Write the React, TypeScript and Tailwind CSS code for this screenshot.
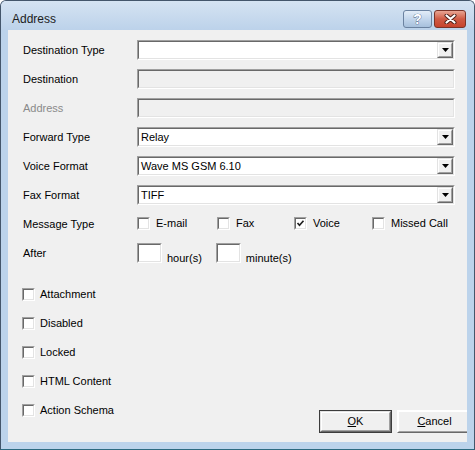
import { ReactNode } from "react";

// classic sunken 3D edge used by edits, combos and check boxes
const Sunken = ({
  className = "",
  inner = "",
  children,
}: {
  className?: string;
  inner?: string;
  children?: ReactNode;
}) => (
  <div
    className={`border border-[#a0a0a0] border-r-white border-b-white ${className}`}
  >
    <div
      className={`h-full w-full border border-[#696969] border-r-[#e3e3e3] border-b-[#e3e3e3] ${inner}`}
    >
      {children}
    </div>
  </div>
);

const Raised = ({
  className = "",
  children,
}: {
  className?: string;
  children?: ReactNode;
}) => (
  <div
    className={`border border-[#e3e3e3] border-r-[#696969] border-b-[#696969] bg-[#f0f0f0] ${className}`}
  >
    <div className="h-full w-full border border-white border-r-[#a0a0a0] border-b-[#a0a0a0] flex items-center justify-center">
      {children}
    </div>
  </div>
);

const ComboBox = ({ value = "" }: { value?: string }) => (
  <Sunken className="h-[20px] flex-1" inner="bg-white flex items-center">
    <span className="flex-1 pl-[2px] text-[11px] leading-none text-black">
      {value}
    </span>
    <Raised className="w-[16px] h-[16px]">
      <svg width="7" height="4" viewBox="0 0 7 4">
        <path d="M0 0h7L3.5 4z" fill="#000" />
      </svg>
    </Raised>
  </Sunken>
);

const TextBox = ({
  disabled,
  className = "h-[20px] flex-1",
}: {
  disabled?: boolean;
  className?: string;
}) => (
  <Sunken
    className={className}
    inner={disabled ? "bg-[#f0f0f0]" : "bg-white"}
  />
);

const CheckBox = ({ checked }: { checked?: boolean }) => (
  <Sunken className="w-[13px] h-[13px] shrink-0" inner="bg-white">
    {checked && (
      <svg width="9" height="9" viewBox="0 0 9 9" className="block">
        <path
          d="M1.5 4 L3.5 6.2 L7.5 1.8"
          fill="none"
          stroke="#222"
          strokeWidth="1.7"
        />
      </svg>
    )}
  </Sunken>
);

const Option = ({
  label,
  checked,
  width,
}: {
  label: string;
  checked?: boolean;
  width: string;
}) => (
  <div className={`flex items-center gap-[6px] ${width}`}>
    <CheckBox checked={checked} />
    <span className="text-[11px] leading-none">{label}</span>
  </div>
);

const Row = ({
  label,
  muted,
  children,
}: {
  label: string;
  muted?: boolean;
  children: ReactNode;
}) => (
  <div className="flex items-center h-[20px]">
    <span
      className={`w-[114px] shrink-0 text-[11px] leading-none ${
        muted ? "text-[#8a8a8a]" : "text-black"
      }`}
    >
      {label}
    </span>
    {children}
  </div>
);

const flags = ["Attachment", "Disabled", "Locked", "HTML Content", "Action Schema"];

export default function App() {
  return (
    <div className="w-[475px] h-[450px] flex flex-col border border-[#44566b] border-b-[#2d6a80] rounded-t-[6px] bg-[#bcd3eb] font-['Liberation_Sans',Arial,sans-serif] text-black overflow-hidden">
      {/* caption */}
      <div className="h-[29px] shrink-0 flex items-center justify-between pt-[6px] pl-[11px] pr-[8px] bg-gradient-to-b from-[#d5e3f2] to-[#bcd2ea]">
        <span className="text-[12px] leading-none text-[#1c1c1c] mt-[1px]">
          Address
        </span>
        <div className="flex gap-[2px]">
          <div className="w-[29px] h-[18px] rounded-[3px] border border-[#6b82a0] bg-gradient-to-b from-[#e3edf8] via-[#c3d6ec] to-[#a7c0dc] flex items-center justify-center">
            <span className="text-[14px] font-bold leading-none text-white [-webkit-text-stroke:0.7px_#3a5274] [paint-order:stroke_fill]">
              ?
            </span>
          </div>
          <div className="w-[32px] h-[18px] rounded-[3px] border border-[#7a3327] bg-gradient-to-b from-[#e8a593] via-[#cf5a44] to-[#c7432d] flex items-center justify-center">
            <svg width="13" height="10" viewBox="0 0 13 10">
              <path
                d="M2.5 1.5 L10.5 8.5 M10.5 1.5 L2.5 8.5"
                stroke="#4a1d15"
                strokeWidth="4"
                strokeLinecap="round"
              />
              <path
                d="M2.5 1.5 L10.5 8.5 M10.5 1.5 L2.5 8.5"
                stroke="#fff"
                strokeWidth="2.2"
                strokeLinecap="round"
              />
            </svg>
          </div>
        </div>
      </div>

      {/* client area */}
      <div className="flex-1 mx-[7px] mb-[7px] bg-[#f0f0f0] overflow-hidden pt-[10px] pl-[15px] pr-[12px] flex flex-col">
        <div className="flex flex-col gap-[9px]">
          <Row label="Destination Type">
            <ComboBox />
          </Row>
          <Row label="Destination">
            <TextBox disabled />
          </Row>
          <Row label="Address" muted>
            <TextBox disabled />
          </Row>
          <Row label="Forward Type">
            <ComboBox value="Relay" />
          </Row>
          <Row label="Voice Format">
            <ComboBox value="Wave MS GSM 6.10" />
          </Row>
          <Row label="Fax Format">
            <ComboBox value="TIFF" />
          </Row>
          <Row label="Message Type">
            <div className="flex items-center mt-[-2px]">
              <Option label="E-mail" width="w-[80px]" />
              <Option label="Fax" width="w-[77px]" />
              <Option label="Voice" checked width="w-[78px]" />
              <Option label="Missed Call" width="w-[90px]" />
            </div>
          </Row>
          <div className="flex h-[20px]">
            <span className="w-[114px] shrink-0 self-center text-[11px] leading-none">
              After
            </span>
            <div className="flex items-end">
              <TextBox className="w-[25px] h-[20px]" />
              <span className="ml-[5px] mb-[-1px] text-[11px] leading-[12px]">
                hour(s)
              </span>
              <TextBox className="ml-[14px] w-[25px] h-[20px]" />
              <span className="ml-[5px] mb-[-1px] text-[11px] leading-[12px]">
                minute(s)
              </span>
            </div>
          </div>
        </div>

        <div className="mt-[21px] ml-[-1px] flex justify-between items-start">
          <div className="flex flex-col gap-[9px]">
            {flags.map((f) => (
              <div key={f} className="h-[20px] flex items-center gap-[5px]">
                <CheckBox />
                <span className="text-[11px] leading-none">{f}</span>
              </div>
            ))}
          </div>
          <div className="mt-[126px] mr-[-17px] flex gap-[5px]">
            <div className="border border-[#3c3c3c]">
              <Raised className="w-[71px] h-[21px]">
                <span className="text-[11px] leading-none">
                  <span className="underline">O</span>K
                </span>
              </Raised>
            </div>
            <Raised className="w-[75px] h-[23px] border-t-white border-l-white border-r-[#3c3c3c] border-b-[#3c3c3c]">
              <span className="text-[11px] leading-none">
                <span className="underline">C</span>ancel
              </span>
            </Raised>
          </div>
        </div>
      </div>
    </div>
  );
}
